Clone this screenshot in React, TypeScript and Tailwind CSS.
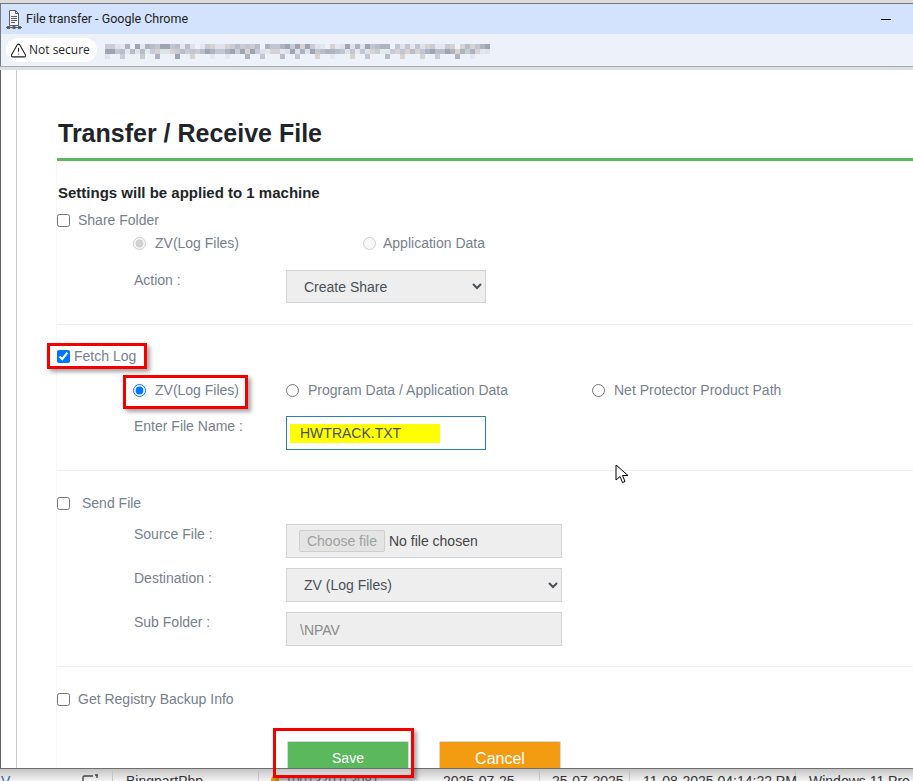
import { ReactNode } from "react";
import { TriangleAlert } from "lucide-react";

const labelColor = "text-[#77808d]";

// mosaic standing in for the blurred address in the omnibox
const tileColors = ["#c9ccd6", "#aeb3c2", "#dfe2ea", "#b9bdca", "#d8d3cf", "#9ea4b5", "#e4e7ef", "#c2c6d2"];

function BlurredUrl() {
  const tiles = [];
  for (let x = 0; x < 77; x++) {
    for (let y = 0; y < 3; y++) {
      const n = (x * 7 + y * 13 + ((x * x) % 11)) % 8;
      if (y === 2 && (x * 5) % 7 > 1) continue;
      if (x % 13 === 5 && y === 0) continue;
      tiles.push(<rect key={x + "-" + y} x={x * 5} y={y * 5} width="5" height="5" fill={tileColors[n]} />);
    }
  }
  return (
    <svg width="385" height="15" viewBox="0 0 385 15" className="blur-[0.5px]">
      {tiles}
    </svg>
  );
}

function ShareDocIcon() {
  return (
    <svg width="16" height="19" viewBox="0 0 16 19" fill="none" stroke="#5c5f66" strokeWidth="1">
      <path d="M3.5 0.5h6l3 3v12h-9z" fill="#f3f5fa" />
      <path d="M9.5 0.5v3h3M5 6.5h6M5 8.5h6M5 10.5h6M5 12.5h4" />
      <path d="M0 17.5h16M8 15.5v2" />
      <rect x="1" y="16" width="3" height="3" fill="#5c5f66" stroke="none" />
      <rect x="6.5" y="16" width="3" height="3" fill="#5c5f66" stroke="none" />
      <rect x="12" y="16" width="3" height="3" fill="#5c5f66" stroke="none" />
    </svg>
  );
}

function Check({ checked, label, gap, labelClass }: { checked?: boolean; label: string; gap: string; labelClass?: string }) {
  return (
    <label className={"flex h-[20px] items-center " + gap}>
      <input type="checkbox" defaultChecked={checked} className="m-0 h-[13px] w-[13px]" />
      <span className={labelColor + " " + (labelClass ?? "")}>{label}</span>
    </label>
  );
}

function Radio({ name, label, checked, disabled, className, gap = "gap-[9px]" }: { name: string; label: string; checked?: boolean; disabled?: boolean; className: string; gap?: string }) {
  return (
    <label className={"flex h-[20px] items-center " + gap + " " + className}>
      <input type="radio" name={name} defaultChecked={checked} disabled={disabled} className="m-0 h-[13px] w-[13px]" />
      <span className={labelColor}>{label}</span>
    </label>
  );
}

function FormRow({ label, className, children }: { label: string; className: string; children: ReactNode }) {
  return (
    <div className={"ml-[77px] flex items-start " + className}>
      <div className={"w-[152px] leading-[20px] " + labelColor}>{label}</div>
      {children}
    </div>
  );
}

function Divider({ className }: { className: string }) {
  return <div className={"h-px bg-[#eeeeee] " + className} />;
}

function Field({ value }: { value: string }) {
  return (
    <select defaultValue={value} className="h-full w-full border border-[#ced4da] bg-[#eeeeee] pl-[13px] text-[#495057]">
      <option>{value}</option>
    </select>
  );
}

function Annotation({ className }: { className: string }) {
  return <div className={"absolute border-[3px] border-[#f40000] shadow-[3px_3px_4px_rgba(0,0,0,0.35)] " + className} />;
}

export default function App() {
  return (
    <div className="relative flex h-[781px] w-[913px] flex-col overflow-hidden bg-white font-['Liberation_Sans',Arial,sans-serif] text-[14px]">
      {/* browser chrome */}
      <div className="h-[3px] shrink-0 bg-[#dcdcdc]" />
      <div className="flex h-[31px] shrink-0 items-center border-t border-l border-[#77797c] bg-[#d3e3fd] pl-[5px] pr-[22px] font-['Roboto',sans-serif] text-[12.5px] text-[#222]">
        <ShareDocIcon />
        <span className="ml-[4px] flex-1">File transfer - Google Chrome</span>
        <div className="h-px w-[10px] bg-black" />
      </div>
      <div className="flex h-[32px] shrink-0 items-center border-l border-[#77797c] bg-[#ecf1fa] pl-[5px]">
        <div className="flex h-[24px] w-[91px] items-center gap-[2px] rounded-full bg-white pl-[4px] font-['Open_Sans',sans-serif] text-[12px] font-medium text-[#1f1f1f]">
          <TriangleAlert size={17} strokeWidth={1.5} />
          <span>Not secure</span>
        </div>
        <div className="ml-[8px] pt-[2px]">
          <BlurredUrl />
        </div>
      </div>
      <div className="h-[4px] shrink-0 border-t border-[#a9abad] bg-[#dedede]" />

      {/* dialog body */}
      <div className="flex min-h-0 flex-1 border-l border-[#5d5f63]">
        <div className="w-[15px] shrink-0 border-r border-[#cccccc] box-content" />
        <div className="min-w-0 flex-1 overflow-hidden pl-[40px]">
          <h1 className="mt-[48px] pl-px text-[25px] font-bold leading-[30px] text-[#212529]">Transfer / Receive File</h1>
          <div className="mt-[10px] h-[3px] bg-[#5cb85c]" />
          <div className="-ml-px border-l border-[#f8f8f8]">
            <p className="pl-px pt-[22px] text-[15px] font-bold leading-[20px] text-[#212529]">Settings will be applied to 1 machine</p>

            <div className="mt-[7px]">
              <Check label="Share Folder" gap="gap-[8px]" labelClass="pt-px" />
            </div>
            <div className="ml-[76px] mt-[3px] flex">
              <Radio name="share" label="ZV(Log Files)" checked disabled className="w-[230px]" />
              <Radio name="share" label="Application Data" disabled className="" gap="gap-[7px]" />
            </div>
            <FormRow label="Action :" className="mt-[17px]">
              <div className="h-[33px] w-[200px]">
                <Field value="Create Share" />
              </div>
            </FormRow>
            <Divider className="mt-[21px]" />

            <div className="mt-[21px]">
              <Check checked label="Fetch Log" gap="gap-[4px]" labelClass="pt-px" />
            </div>
            <div className="ml-[76px] mt-[14px] flex">
              <Radio name="fetch" label="ZV(Log Files)" checked className="w-[153px]" />
              <Radio name="fetch" label="Program Data / Application Data" className="w-[306px]" />
              <Radio name="fetch" label="Net Protector Product Path" className="" />
            </div>
            <FormRow label="Enter File Name :" className="mt-[16px]">
              <div className="flex h-[34px] w-[200px] items-center border border-[#2d7fb0] px-[3px]">
                <span className="h-[19px] w-[150px] bg-[#ffff00] pl-[10px] leading-[19px] text-[#495057]">HWTRACK.TXT</span>
              </div>
            </FormRow>
            <Divider className="mt-[20px]" />

            <div className="mt-[22px]">
              <Check label="Send File" gap="gap-[12px]" />
            </div>
            <FormRow label="Source File :" className="mt-[11px]">
              <div className="flex h-[34px] w-[276px] items-center border border-[#ced4da] bg-[#eeeeee] pl-[12px]">
                <span className="flex h-[22px] w-[86px] items-center justify-center rounded-[2px] border border-[#cfcfcf] bg-[#e4e4e4] text-[#a0a0a0]">Choose file</span>
                <span className="ml-[4px] pt-px text-[#444]">No file chosen</span>
              </div>
            </FormRow>
            <FormRow label="Destination :" className="mt-[10px]">
              <div className="h-[34px] w-[276px]">
                <Field value="ZV (Log Files)" />
              </div>
            </FormRow>
            <FormRow label="Sub Folder :" className="mt-[10px]">
              <div className="flex h-[34px] w-[276px] items-center border border-[#ced4da] bg-[#eeeeee] pl-[13px] pt-[2px] text-[#8a8a8a]">\NPAV</div>
            </FormRow>
            <Divider className="mt-[20px]" />

            <div className="mt-[22px]">
              <Check label="Get Registry Backup Info" gap="gap-[8px]" />
            </div>
            <div className="ml-[230px] mt-[32px] flex gap-[30px]">
              <button className="h-[34px] w-[122px] rounded-t-[2px] border border-b-0 border-[#d5d9dc] bg-[#5cb85c] text-white">Save</button>
              <button className="h-[34px] w-[122px] rounded-t-[2px] border border-b-0 border-[#d5d9dc] bg-[#f39c12] text-[16px] text-white">Cancel</button>
            </div>
          </div>
        </div>
      </div>

      {/* table row of the page behind the popup */}
      <div className="flex h-[13px] shrink-0 overflow-hidden whitespace-nowrap border-t border-[#6f6f6f] bg-gradient-to-b from-[#c4c4c4] to-[#f4f4f4] text-[#333] leading-[20px]">
        <div className="flex w-[113px] justify-between border-r border-[#c4c4c4] pl-px pr-[12px] pt-[2px] text-[#2563a8]">
          <span>V</span>
          <svg width="18" height="12" viewBox="0 0 18 12" fill="none" stroke="#444" strokeWidth="1.4" className="mt-[3px]">
            <path d="M1 11V3.5a1.5 1.5 0 0 1 1.5-1.5H11M13 1l3 0M15 1v3" />
          </svg>
        </div>
        <div className="w-[146px] border-r border-[#c4c4c4] pl-[13px] pt-[2px]">BingpartPhp</div>
        <div className="flex w-[172px] items-start gap-[6px] pl-[12px] pt-[2px] text-[#777]">
          <span className="mt-[5px] h-[8px] w-[8px] shrink-0 rounded-full bg-[#e09a1a]" />
          <span className="text-[13px]">1001370 0 3081</span>
        </div>
        <div className="w-[109px] border-r border-[#c4c4c4] pl-[12px] pt-[2px]">2025-07-25</div>
        <div className="w-[90px] border-r border-[#c4c4c4] pl-[12px] pt-[2px]">25-07-2025</div>
        <div className="w-[166px] border-r border-[#c4c4c4] pl-[13px] pt-[2px]">11-08-2025 04:14:22 PM</div>
        <div className="flex-1 pl-[13px] pt-[2px]">Windows 11 Pro</div>
      </div>

      {/* hand-drawn highlights and the mouse pointer over the screenshot */}
      <Annotation className="left-[47px] top-[343px] h-[26px] w-[100px]" />
      <Annotation className="left-[123px] top-[375px] h-[34px] w-[125px]" />
      <Annotation className="left-[273px] top-[728px] h-[50px] w-[141px]" />
      <svg width="14" height="20" viewBox="0 0 14 20" className="absolute left-[615px] top-[464px]">
        <path d="M1 1v15l4-3.5 2.5 6 2.5-1-2.5-6H13z" fill="white" stroke="black" strokeWidth="1" strokeLinejoin="round" />
      </svg>
    </div>
  );
}
